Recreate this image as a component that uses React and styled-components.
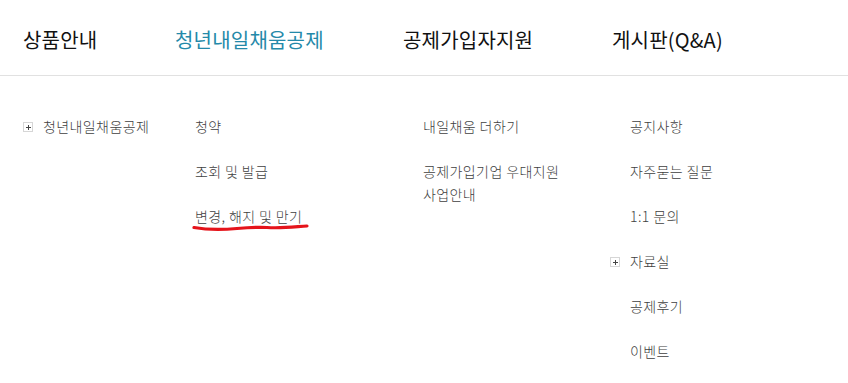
import React from 'react';
import styled, { createGlobalStyle } from 'styled-components';

const GlobalStyle = createGlobalStyle`
  body {
    margin: 0;
    background: #ffffff;
    font-family: "Noto Sans CJK KR", "Noto Sans", "Liberation Sans", sans-serif;
  }
`;

const menus = [
  {
    title: '상품안내',
    items: [{ label: '청년내일채움공제', toggle: true }],
  },
  {
    title: '청년내일채움공제',
    active: true,
    items: [{ label: '청약' }, { label: '조회 및 발급' }, { label: '변경, 해지 및 만기', marked: true }],
  },
  {
    title: '공제가입자지원',
    items: [{ label: '내일채움 더하기' }, { label: '공제가입기업 우대지원 사업안내' }],
  },
  {
    title: '게시판(Q&A)',
    shift: 2,
    items: [
      { label: '공지사항' },
      { label: '자주묻는 질문' },
      { label: '1:1 문의' },
      { label: '자료실', toggle: true },
      { label: '공제후기' },
      { label: '이벤트' },
    ],
  },
];

const Page = styled.div`
  width: 848px;
  min-height: 383px;
  background: #fff;
`;

const Columns = styled.div`
  display: grid;
  grid-template-columns: 152px 228px 207px 1fr;
  padding-left: 23px;
`;

const Header = styled(Columns)`
  height: 76px;
  align-items: center;
  padding-top: 4px;
  box-sizing: border-box;
  border-bottom: 1px solid #e1e1e1;
`;

const NavItem = styled.div`
  font-size: 20px;
  letter-spacing: 0.2px;
  color: ${(p) => (p.active ? '#2489a9' : '#111')};
  padding-left: ${(p) => p.shift || 0}px;
  white-space: nowrap;
`;

const Body = styled(Columns)`
  padding-top: 39px;
`;

const List = styled.ul`
  list-style: none;
  margin: 0;
  padding: 0;
  display: flex;
  flex-direction: column;
  gap: 22px;
`;

const Row = styled.li`
  display: flex;
  align-items: flex-start;
  font-size: 14px;
  font-weight: 300;
  letter-spacing: 0.4px;
  line-height: 23px;
  color: #3f3f3f;
`;

const Marker = styled.span`
  width: 20px;
  flex: none;
  display: flex;
  align-items: center;
  height: 23px;
`;

const PlusBox = styled.span`
  width: 8px;
  height: 8px;
  border: 1px solid #d6d6d6;
  position: relative;
  &::before,
  &::after {
    content: '';
    position: absolute;
    background: #444;
  }
  &::before {
    left: 2px;
    top: 4px;
    width: 5px;
    height: 1px;
  }
  &::after {
    left: 4px;
    top: 2px;
    width: 1px;
    height: 5px;
  }
`;

const Label = styled.span`
  position: relative;
  max-width: 150px;
  word-break: keep-all;
`;

const Scribble = styled.svg`
  position: absolute;
  left: -2px;
  top: 18px;
  overflow: visible;
`;

const RedLine = () => (
  <Scribble width="118" height="10" viewBox="0 0 118 10">
    <path
      d="M1 4.5 C 12 6.5, 28 7, 44 5.5 C 56 4.5, 64 4, 74 4.5 C 90 5.5, 104 3.5, 114 3"
      fill="none"
      stroke="#e5141b"
      strokeWidth="3.2"
      strokeLinecap="round"
    />
  </Scribble>
);

const App = () => (
  <Page>
    <GlobalStyle />
    <Header>
      {menus.map((m) => (
        <NavItem key={m.title} active={m.active} shift={m.shift}>
          {m.title}
        </NavItem>
      ))}
    </Header>
    <Body>
      {menus.map((m) => (
        <List key={m.title}>
          {m.items.map((it) => (
            <Row key={it.label}>
              <Marker>{it.toggle && <PlusBox />}</Marker>
              <Label>
                {it.label}
                {it.marked && <RedLine />}
              </Label>
            </Row>
          ))}
        </List>
      ))}
    </Body>
  </Page>
);

export default App;
